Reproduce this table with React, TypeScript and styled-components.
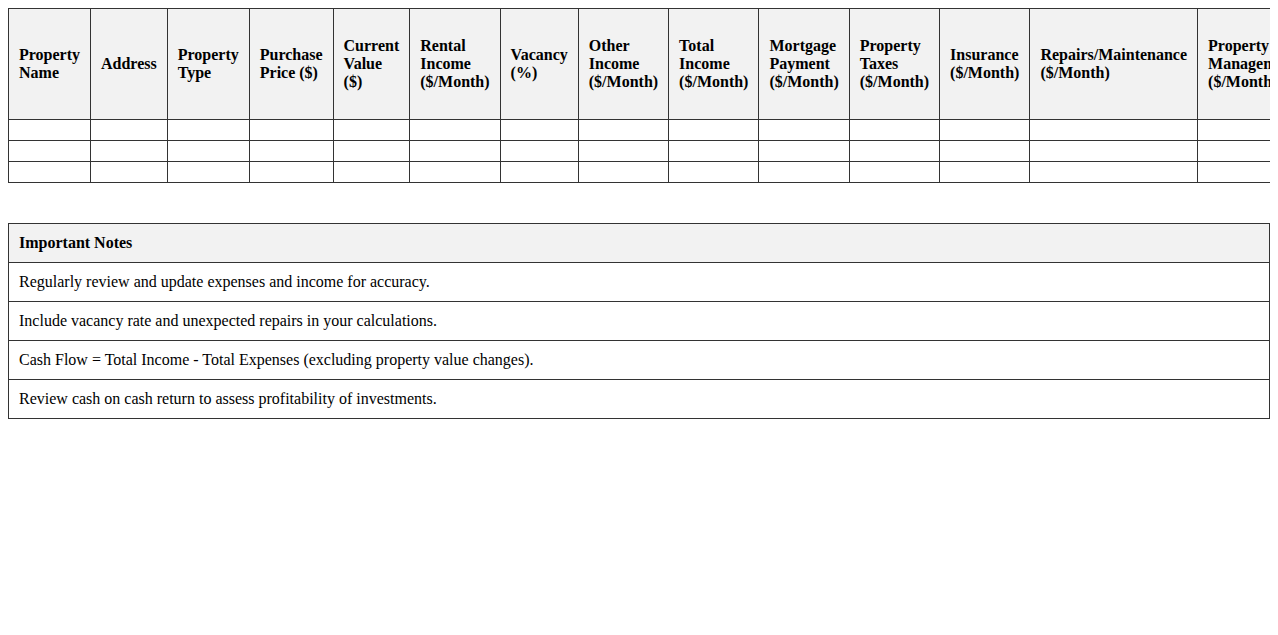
import React from 'react';
import styled, { createGlobalStyle } from 'styled-components';

const GlobalStyle = createGlobalStyle`
  body {
    margin: 8px;
    font-family: 'Liberation Serif', 'Times New Roman', serif;
    font-size: 16px;
    color: #000;
    background: #fff;
  }
`;

const Page = styled.div`
  display: flex;
  flex-direction: column;
  gap: 40px;
`;

// the wide sheet runs off the right edge of the window
const SheetClip = styled.div`
  overflow: hidden;
  margin-right: -8px;
`;

const Table = styled.table`
  width: 100%;
  border-collapse: collapse;
`;

const HeadCell = styled.th`
  border: 1px solid #333;
  padding: 10px;
  text-align: left;
  vertical-align: middle;
  background: #f2f2f2;
  font-weight: bold;
`;

const Cell = styled.td`
  border: 1px solid #333;
  padding: 10px;
  text-align: left;
`;

const columns = [
  'Property Name',
  'Address',
  'Property Type',
  'Purchase Price ($)',
  'Current Value ($)',
  'Rental Income ($/Month)',
  'Vacancy (%)',
  'Other Income ($/Month)',
  'Total Income ($/Month)',
  'Mortgage Payment ($/Month)',
  'Property Taxes ($/Month)',
  'Insurance ($/Month)',
  'Repairs/Maintenance ($/Month)',
  'Property Management ($/Month)',
  'Utilities ($/Month)',
  'Total Expenses ($/Month)',
  'Cash Flow ($/Month)',
  'Cash on Cash Return (%)',
];

const notes = [
  'Regularly review and update expenses and income for accuracy.',
  'Include vacancy rate and unexpected repairs in your calculations.',
  'Cash Flow = Total Income - Total Expenses (excluding property value changes).',
  'Review cash on cash return to assess profitability of investments.',
];

export default function App(): JSX.Element {
  return (
    <>
      <GlobalStyle />
      <Page>
        <SheetClip>
          <Table>
            <thead>
              <tr>
                {columns.map((c) => (
                  <HeadCell key={c}>{c}</HeadCell>
                ))}
              </tr>
            </thead>
            <tbody>
              {[0, 1, 2].map((r) => (
                <tr key={r}>
                  {columns.map((c) => (
                    <Cell key={c} />
                  ))}
                </tr>
              ))}
            </tbody>
          </Table>
        </SheetClip>

        <Table>
          <thead>
            <tr>
              <HeadCell>Important Notes</HeadCell>
            </tr>
          </thead>
          <tbody>
            {notes.map((n) => (
              <tr key={n}>
                <Cell>{n}</Cell>
              </tr>
            ))}
          </tbody>
        </Table>
      </Page>
    </>
  );
}
